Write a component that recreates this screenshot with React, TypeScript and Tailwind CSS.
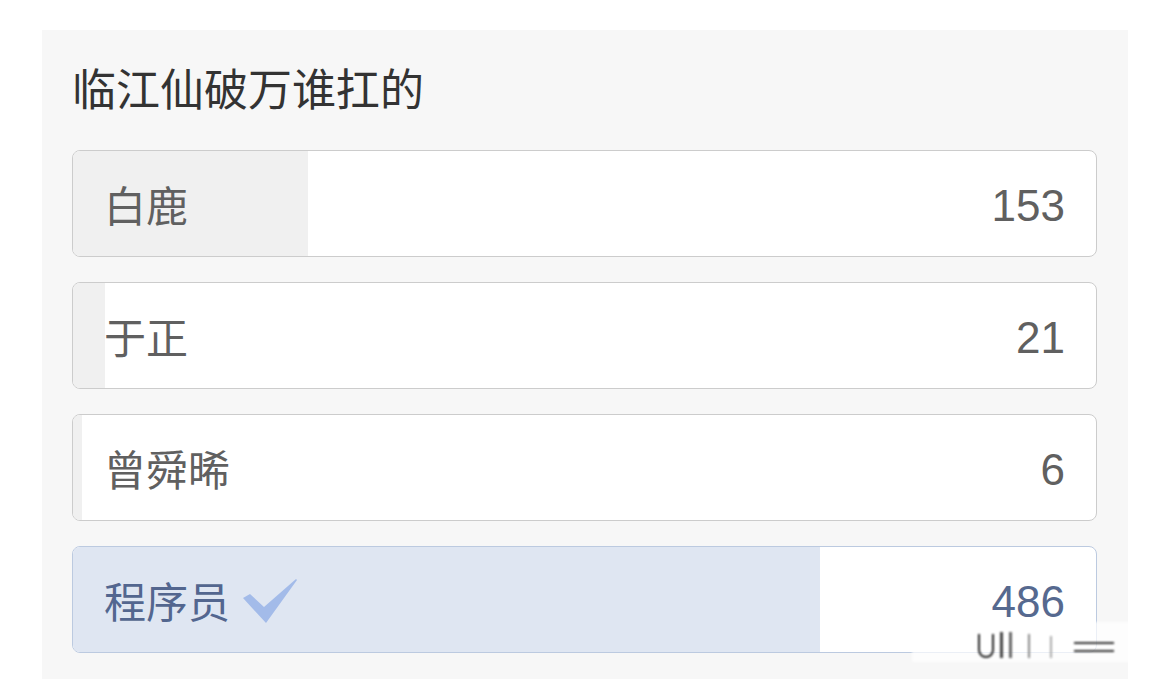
import React from 'react';

interface PollOption {
  label: string;
  votes: number;
  chosen?: boolean;
}

const options: PollOption[] = [
  { label: '白鹿', votes: 153 },
  { label: '于正', votes: 21 },
  { label: '曾舜晞', votes: 6 },
  { label: '程序员', votes: 486, chosen: true },
];

const total = options.reduce((sum, o) => sum + o.votes, 0);

const cjk = { fontFamily: '"Noto Sans CJK SC", "Noto Sans", sans-serif' };
const num = { fontFamily: '"Liberation Sans", Arial, sans-serif' };

const CheckMark = () => (
  <svg width="54" height="44" viewBox="0 0 54 44" className="ml-[13px] mt-[2px]">
    <polygon points="0,19 7,15 21,28 53,0 54,1 23,44" fill="#a3bbe9" />
  </svg>
);

const OptionRow: React.FC<{ option: PollOption }> = ({ option }) => {
  const pct = (option.votes / total) * 100;
  return (
    <div
      className={
        'relative flex h-[107px] items-center justify-between overflow-hidden rounded-[8px] border bg-white pl-[31px] pr-[31px] ' +
        (option.chosen ? 'border-[#bccae0]' : 'border-[#cccccc]')
      }
    >
      {/* vote share */}
      <div
        className={'absolute inset-y-0 left-0 ' + (option.chosen ? 'bg-[#dfe6f2]' : 'bg-[#f0f0f0]')}
        style={{ width: `${pct}%` }}
      />
      <div className="relative flex items-center">
        <span
          className={'text-[42px] leading-none ' + (option.chosen ? 'text-[#53668f]' : 'text-[#606060]')}
          style={cjk}
        >
          {option.label}
        </span>
        {option.chosen && <CheckMark />}
      </div>
      <span
        className={'relative mt-[4px] text-[44px] leading-none ' + (option.chosen ? 'text-[#56698f]' : 'text-[#606060]')}
        style={num}
      >
        {option.votes}
      </span>
    </div>
  );
};

export default function App() {
  return (
    <div className="relative h-[679px] w-[1170px] overflow-hidden bg-white">
      <div className="ml-[42px] mt-[30px] h-[649px] w-[1086px] bg-[#f7f7f7] pl-[30px] pr-[31px] pt-[30px]">
        <h1 className="mb-[36px] text-[44px] leading-[54px] font-normal text-[#333333]" style={cjk}>
          临江仙破万谁扛的
        </h1>
        <div className="flex flex-col gap-[25px]">
          {options.map((o) => (
            <OptionRow key={o.label} option={o} />
          ))}
        </div>
      </div>

      {/* watermark */}
      <div className="absolute left-[912px] top-[622px] flex h-[40px] w-[240px] items-end gap-[6px] bg-white/70 pb-[4px] pl-[66px] blur-[1px]">
        <div className="h-[24px] w-[16px] rounded-b-[8px] border-x-[2px] border-b-[2px] border-[#222]" />
        <div className="h-[26px] w-[3px] bg-[#444]" />
        <div className="h-[26px] w-[3px] bg-[#666]" />
        <div className="ml-[10px] h-[24px] w-[2px] bg-[#888]" />
        <div className="ml-[14px] h-[22px] w-[2px] bg-[#aaa]" />
        <div className="ml-[16px] flex flex-col gap-[6px] pb-[6px]">
          <div className="h-[2px] w-[40px] bg-[#333]" />
          <div className="h-[2px] w-[40px] bg-[#333]" />
        </div>
      </div>
    </div>
  );
}
